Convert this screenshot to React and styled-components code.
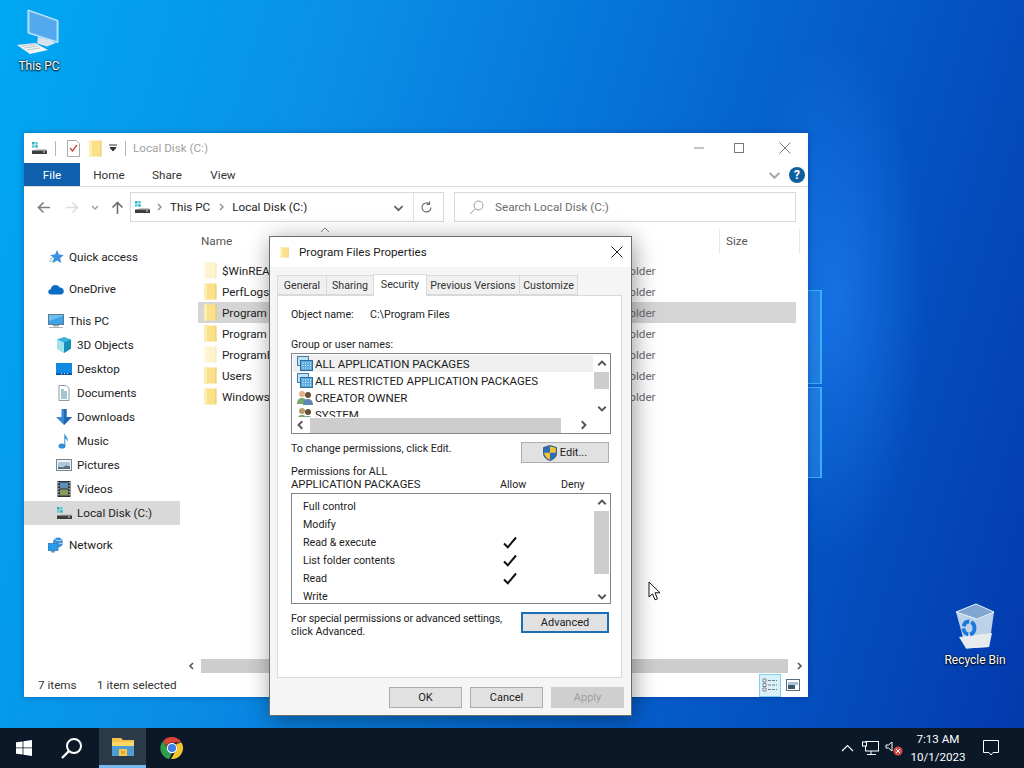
import React from 'react';
import styled, { createGlobalStyle } from 'styled-components';

const Global = createGlobalStyle`
  html, body { margin: 0; padding: 0; }
  body { font-family: Roboto, "Liberation Sans", sans-serif; font-size: 11.7px; color: #1c1c1c; }
  * { box-sizing: border-box; }
`;

const Desktop = styled.div`
  position: relative;
  width: 1024px;
  height: 768px;
  overflow: hidden;
  background:
    radial-gradient(ellipse 90px 260px at 835px 300px, rgba(40, 140, 255, .5), transparent),
    linear-gradient(106deg, #00a8f2 0%, #0a90e6 28%, #0672d8 52%, #0556c6 74%, #0339ab 100%);
`;

const LogoPane = styled.div`
  position: absolute;
  left: 800px;
  width: 22px;
  top: ${p => p.$top}px;
  height: ${p => p.$height}px;
  background: rgba(60, 165, 245, .34);
  border-right: 2px solid #38b0f4;
  border-top: 1px solid #38b0f4;
  border-bottom: 1px solid #38b0f4;
`;

const DesktopIcon = styled.div`
  position: absolute;
  left: ${p => p.$x}px;
  top: ${p => p.$y}px;
  width: 76px;
  display: flex;
  flex-direction: column;
  align-items: center;
  gap: ${p => p.$gap}px;
  color: #fff;
  font-size: 12px;
  text-shadow: 0 1px 2px #000, 0 0 2px #000;
`;

/* explorer window */
const Explorer = styled.div`
  position: absolute;
  left: 24px;
  top: 133px;
  width: 784px;
  height: 564px;
  background: #fff;
  display: flex;
  flex-direction: column;
  box-shadow: 0 0 6px rgba(0, 30, 90, .35);
`;

const TitleBar = styled.div`
  height: 30px;
  display: flex;
  align-items: center;
  padding-left: 7px;
  flex-shrink: 0;
`;

const TitleSep = styled.span`
  width: 1px;
  height: 15px;
  background: #b5b5b5;
  margin: 0 ${p => p.$right}px 0 ${p => p.$left}px;
`;

const TitleText = styled.span`
  color: #a2a2a2;
  flex: 1;
`;

const TitleGap = styled.span`
  width: ${p => p.$w}px;
`;

const WindowCtl = styled.span`
  display: flex;
  justify-content: center;
  width: ${p => p.$w}px;
`;

const RibbonTabs = styled.div`
  height: 24px;
  display: flex;
  align-items: center;
  border-bottom: 1px solid #dadada;
  flex-shrink: 0;
`;

const FileTab = styled.div`
  width: 56px;
  height: 23px;
  background: #0f5fad;
  color: #fff;
  display: flex;
  align-items: center;
  justify-content: center;
`;

const RibbonTab = styled.div`
  width: 56px;
  text-align: center;
  color: #333;
  margin-left: ${p => p.$ml || 0}px;
`;

const RibbonRight = styled.div`
  margin-left: auto;
  display: flex;
  align-items: center;
  gap: 8px;
  padding-right: 3px;
`;

const HelpBadge = styled.span`
  width: 16px;
  height: 16px;
  border-radius: 50%;
  background: #10609f;
  color: #fff;
  font-weight: 700;
  font-size: 12px;
  display: flex;
  align-items: center;
  justify-content: center;
`;

const AddressRow = styled.div`
  height: 40px;
  display: flex;
  align-items: center;
  flex-shrink: 0;
`;

const NavButtons = styled.div`
  width: 106px;
  display: flex;
  align-items: center;
  padding-left: 12px;
`;

const NavButton = styled.span`
  display: flex;
  justify-content: center;
  width: ${p => p.$w}px;
`;

const AddressBox = styled.div`
  width: 314px;
  height: 30px;
  border: 1px solid #d9d9d9;
  display: flex;
  align-items: center;
  padding-left: 3px;
  color: #222;
`;

const Crumb = styled.span`
  display: flex;
  margin-left: ${p => p.$ml}px;
`;

const AddressTools = styled.div`
  margin-left: auto;
  display: flex;
  align-items: center;
`;

const ToolSep = styled.span`
  width: 1px;
  height: 28px;
  background: #e3e3e3;
  margin: 0 6px 0 9px;
`;

const SearchBox = styled.div`
  margin-left: 10px;
  width: 342px;
  height: 30px;
  border: 1px solid #d9d9d9;
  display: flex;
  align-items: center;
  gap: 11px;
  padding-left: 14px;
  color: #6d6d6d;
`;

const Body = styled.div`
  flex: 1;
  display: flex;
  min-height: 0;
`;

const NavPane = styled.div`
  width: 162px;
  padding: 18px 6px 0 0;
  flex-shrink: 0;
`;

const NavItem = styled.div`
  height: 24px;
  display: flex;
  align-items: center;
  gap: 5px;
  padding-left: ${p => p.$child ? 32 : 24}px;
  margin-top: ${p => p.$gap ? 8 : 0}px;
  background: ${p => p.$selected ? '#d9d9d9' : 'transparent'};
  color: #222;
`;

const MainCol = styled.div`
  flex: 1;
  display: flex;
  flex-direction: column;
  min-width: 0;
`;

const ColHeader = styled.div`
  position: relative;
  height: 33px;
  margin-left: 12px;
  display: grid;
  grid-template-columns: 522px 80px;
  align-items: start;
  padding-top: 2px;
  color: #555;
`;

const ColCell = styled.div`
  height: 25px;
  line-height: 24px;
  padding-left: ${p => p.$pad}px;
  border-right: ${p => p.$line ? '1px solid #e8e8e8' : 'none'};
`;

const SortCaret = styled.svg`
  position: absolute;
  left: 122px;
  top: 0;
`;

const FileList = styled.div`
  flex: 1;
  margin-left: 12px;
  width: 598px;
`;

const FileRow = styled.div`
  height: 21px;
  display: grid;
  grid-template-columns: 406px 1fr;
  align-items: center;
  background: ${p => p.$selected ? '#d5d5d5' : 'transparent'};
`;

const FileName = styled.div`
  display: flex;
  align-items: center;
  gap: 5px;
  padding-left: 5px;
  color: #222;
  white-space: nowrap;
`;

const FileType = styled.div`
  color: #6d6d6d;
`;

const HScroll = styled.div`
  height: 15px;
  display: flex;
  align-items: center;
  padding: 0 5px 0 2px;
`;

const ScrollTrack = styled.div`
  flex: 1;
  height: 14px;
  background: #cdcdcd;
  margin: 0 7px 0 5px;
`;

const ArrowBox = styled.span`
  display: flex;
  align-items: center;
  justify-content: center;
  width: ${p => p.$w || 16}px;
  height: ${p => p.$h || 16}px;
  flex-shrink: 0;
`;

const StatusBar = styled.div`
  height: 24px;
  display: flex;
  align-items: center;
  padding-left: 14px;
  color: #333;
  flex-shrink: 0;
`;

const StatusText = styled.span`
  width: ${p => p.$w}px;
`;

const ViewButtons = styled.div`
  margin-left: auto;
  display: flex;
  align-items: center;
  gap: 4px;
  padding-right: 7px;
`;

const ViewButton = styled.span`
  width: ${p => p.$active ? 22 : 16}px;
  height: 23px;
  display: flex;
  align-items: center;
  justify-content: center;
  background: ${p => p.$active ? '#d8f0fa' : 'transparent'};
  border: ${p => p.$active ? '1px solid #7fd0ef' : 'none'};
`;

/* properties dialog */
const Dialog = styled.div`
  position: absolute;
  left: 269px;
  top: 236px;
  width: 363px;
  height: 480px;
  background: #f5f5f5;
  border: 1px solid #6c6c6c;
  display: flex;
  flex-direction: column;
  font-size: 10.7px;
  box-shadow: 2px 4px 22px rgba(0, 0, 0, .4);
`;

const DialogTitle = styled.div`
  height: 30px;
  background: #fff;
  display: flex;
  align-items: center;
  padding-left: 10px;
  gap: 10px;
  font-size: 11.6px;
  color: #1c1c1c;
  flex-shrink: 0;
`;

const DialogClose = styled.span`
  margin-left: auto;
  display: flex;
  margin-right: 8px;
`;

const TabStrip = styled.div`
  height: 28px;
  padding: 8px 0 0 7px;
  display: flex;
  align-items: flex-end;
  flex-shrink: 0;
`;

const Tab = styled.div`
  width: ${p => p.$w}px;
  height: ${p => p.$active ? 22 : 20}px;
  background: ${p => p.$active ? '#fff' : '#f0f0f0'};
  border: 1px solid #d9d9d9;
  border-bottom: ${p => p.$active ? 'none' : '1px solid #d9d9d9'};
  margin-left: ${p => p.$first ? 0 : -1}px;
  display: flex;
  align-items: center;
  justify-content: center;
  padding-bottom: ${p => p.$active ? 3 : 0}px;
  position: relative;
  z-index: ${p => p.$active ? 1 : 0};
  margin-bottom: ${p => p.$active ? -1 : 0}px;
  color: #333;
  white-space: nowrap;
`;

const Panel = styled.div`
  width: 345px;
  height: 383px;
  margin-left: 7px;
  background: #fff;
  border: 1px solid #d9d9d9;
  padding: 11px 0 0 13px;
  flex-shrink: 0;
`;

const ObjectRow = styled.div`
  display: flex;
  height: 16px;
  line-height: 16px;
`;

const ObjectLabel = styled.span`
  width: 79px;
`;

const GroupLabel = styled.div`
  margin-top: 14px;
  height: 16px;
  line-height: 16px;
`;

const ListBox = styled.div`
  width: 320px;
  height: ${p => p.$h}px;
  border: 1px solid #82878f;
  background: #fff;
  display: grid;
  grid-template-columns: 301px 1fr;
  grid-template-rows: ${p => p.$hbar ? '1fr 16px' : '1fr'};
  overflow: hidden;
`;

const ListRows = styled.div`
  padding: ${p => p.$padTop}px 0 0 1px;
  overflow: hidden;
  min-height: 0;
`;

const GroupRow = styled.div`
  height: 17px;
  display: flex;
  align-items: center;
  gap: 2px;
  padding-left: 4px;
  font-size: 11.5px;
  background: ${p => p.$selected ? '#f0f0f0' : 'transparent'};
  white-space: nowrap;
`;

const PermRow = styled.div`
  height: 18px;
  display: grid;
  grid-template-columns: 192px 30px;
  align-items: center;
  padding-left: 10px;
`;

const PermCheck = styled.span`
  display: flex;
  justify-content: center;
`;

const VBar = styled.div`
  display: flex;
  flex-direction: column;
  align-items: center;
  padding: ${p => p.$pad}px 0 0 0;
  background: #fff;
  min-height: 0;
  overflow: hidden;
`;

const VThumb = styled.div`
  width: 15px;
  height: ${p => p.$h}px;
  background: #cdcdcd;
  margin-bottom: ${p => p.$after}px;
  flex-shrink: 0;
`;

const HBar = styled.div`
  display: flex;
  align-items: center;
  grid-column: 1 / 2;
  background: #fff;
`;

const HThumb = styled.div`
  width: 251px;
  height: 15px;
  background: #cdcdcd;
  margin-right: 13px;
`;

const EditRow = styled.div`
  width: 318px;
  margin-top: 8px;
  display: flex;
  justify-content: space-between;
  align-items: flex-start;
`;

const EditText = styled.span`
  line-height: 13px;
  white-space: nowrap;
`;

const TightLine = styled.span`
  letter-spacing: -0.13px;
`;

const CapsLine = styled.span`
  font-size: 11.3px;
`;

const PushButton = styled.button`
  width: ${p => p.$w || 88}px;
  height: 21px;
  font: inherit;
  font-size: 11px;
  padding: 0;
  flex-shrink: 0;
  color: ${p => p.$disabled ? '#a0a0a0' : '#222'};
  background: ${p => p.$disabled ? '#cfcfcf' : '#e1e1e1'};
  border: ${p => p.$focused ? '2px solid #1a6fb5' : p.$disabled ? '1px solid #cfcfcf' : '1px solid #adadad'};
  display: flex;
  align-items: center;
  justify-content: center;
  gap: 3px;
`;

const PermHead = styled.div`
  width: 320px;
  margin: 2px 0;
  height: 26px;
  line-height: 13px;
  display: grid;
  grid-template-columns: 209px 61px 1fr;
  align-items: end;
`;

const Footer = styled.div`
  flex: 1;
  display: flex;
  justify-content: flex-end;
  gap: 8px;
  padding: 9px 7px 0 0;
`;

/* taskbar */
const Taskbar = styled.div`
  position: absolute;
  left: 0;
  right: 0;
  bottom: 0;
  height: 40px;
  background: #0a1828;
  display: flex;
  align-items: center;
  color: #fff;
`;

const TaskButton = styled.div`
  width: ${p => p.$w}px;
  height: 40px;
  margin-left: ${p => p.$ml || 0}px;
  display: flex;
  align-items: center;
  justify-content: center;
  background: ${p => p.$active ? '#2c3b49' : 'transparent'};
  border-bottom: ${p => p.$active ? '3px solid #76b9ed' : 'none'};
`;

const Tray = styled.div`
  margin-left: auto;
  display: flex;
  align-items: center;
  height: 40px;
  padding-right: 15px;
`;

const TrayIcon = styled.span`
  display: flex;
  justify-content: center;
  width: ${p => p.$w}px;
`;

const Clock = styled.div`
  width: 67px;
  padding-right: 3px;
  text-align: center;
  line-height: 18px;
  font-size: 11.6px;
`;

const Cursor = styled.svg`
  position: absolute;
  left: 648px;
  top: 581px;
`;

/* drawings */
const FolderIcon = ({ faded, w = 14, h = 17 }) => (
  <svg width={w} height={h} viewBox="0 0 14 17">
    <rect x="1" y="0.5" width="12" height="16" fill={faded ? '#fdf3cc' : '#fbe08a'} />
    <rect x="1" y="0.5" width="3" height="16" fill={faded ? '#fff8de' : '#fdeeb4'} />
    <path d="M13 .5v16" stroke={faded ? '#f0e3b0' : '#e8c560'} />
  </svg>
);

const DiskIcon = () => (
  <svg width="16" height="14" viewBox="0 0 16 14">
    <rect x="1" y="1" width="2.5" height="2.5" fill="#27b0c0" />
    <rect x="4.2" y="1" width="2.5" height="2.5" fill="#5cc8d4" />
    <rect x="1" y="4.2" width="2.5" height="2.5" fill="#5cc8d4" />
    <rect x="4.2" y="4.2" width="2.5" height="2.5" fill="#27b0c0" />
    <path d="M7 8l8 0 1 1.5H1z" fill="#c4c4c4" />
    <rect x="1" y="9.5" width="15" height="3.5" fill="#3d3d3d" />
    <rect x="12" y="10.5" width="2" height="1" fill="#dcdcdc" />
  </svg>
);

const Chevron = ({ dir = 'right', size = 8, color = '#8a8a8a', width = 1.3 }) => {
  const d = {
    right: 'M3 1l3 3-3 3',
    left: 'M5 1L2 4l3 3',
    up: 'M1 5l3-3 3 3',
    down: 'M1 3l3 3 3-3',
  }[dir];
  return (
    <svg width={size} height={size} viewBox="0 0 8 8">
      <path d={d} fill="none" stroke={color} strokeWidth={width} />
    </svg>
  );
};

const Arrow = ({ dir, color }) => {
  const r = { left: 0, right: 180, up: 90 }[dir];
  return (
    <svg width="13" height="13" viewBox="0 0 13 13" style={{ transform: `rotate(${r}deg)` }}>
      <path d="M13 6.500H1.500M6.500 1.500l-5 5 5 5" fill="none" stroke={color} strokeWidth="1.600" />
    </svg>
  );
};

const StarIcon = () => (
  <svg width="16" height="16" viewBox="0 0 16 16">
    <path d="M9 1l2 4.600 4.800.4-3.600 3.200 1.100 4.800L9 11.500 4.700 14l1.100-4.800L2.200 6 7 5.600z" fill="#3c92dc" />
    <path d="M1 12h4M2 9.500h2" stroke="#8ab6d8" />
  </svg>
);

const CloudIcon = () => (
  <svg width="16" height="14" viewBox="0 0 16 14">
    <path d="M3.500 12.500C1.500 12.500.2 11.300.2 9.800c0-1.500 1.100-2.500 2.500-2.600C3.100 4.500 5.200 3 7.500 3c2 0 3.500 1 4.200 2.600 2.300 0 4.100 1.700 4.100 3.700 0 1.800-1.300 3.200-3.200 3.200z" fill="#0c6cc4" />
  </svg>
);

const MonitorIcon = () => (
  <svg width="16" height="16" viewBox="0 0 16 16">
    <rect x="0.500" y="1.500" width="15" height="10" fill="#6cc0f0" stroke="#5c7a96" />
    <path d="M1 8l14-5v8H1z" fill="#3ea2e6" />
    <rect x="5" y="12" width="6" height="1.500" fill="#9aa8b4" />
    <rect x="1" y="14" width="14" height="1" fill="#aab4bc" />
  </svg>
);

const CubeIcon = () => (
  <svg width="16" height="16" viewBox="0 0 16 16">
    <path d="M8 0l7 2.500v9L8 16 1 11.500v-9z" fill="#38b4d8" />
    <path d="M1 2.500L8 5.500V16L1 11.500z" fill="#9fe4ee" />
    <path d="M8 5.500l7-3v9L8 16z" fill="#178fb8" />
  </svg>
);

const DesktopIconSvg = () => (
  <svg width="16" height="14" viewBox="0 0 16 14">
    <rect x="0" y="1" width="16" height="12" fill="#0f8ae2" />
    <rect x="0" y="11" width="16" height="2" fill="#0a5ba4" />
    <path d="M5 11.500h1M8 11.500h1M11 11.500h1" stroke="#bfe0f5" />
  </svg>
);

const DocIcon = () => (
  <svg width="16" height="16" viewBox="0 0 16 16">
    <path d="M3 .5h7l3 3v12H3z" fill="#fff" stroke="#8f9aa6" />
    <path d="M5 5h3M5 7h6M5 9h6M5 11h6M5 13h6" stroke="#3c8f9e" />
  </svg>
);

const DownloadIcon = () => (
  <svg width="16" height="16" viewBox="0 0 16 16">
    <path d="M5.500 0h5v8H16l-8 8-8-8h5.500z" fill="#3a86d6" />
    <path d="M8 0h2.500v8H16l-8 8z" fill="#1f68b8" />
  </svg>
);

const MusicIcon = () => (
  <svg width="16" height="16" viewBox="0 0 16 16">
    <ellipse cx="6" cy="13" rx="3.500" ry="2.600" fill="#2e8ed8" />
    <path d="M8.300 13V0c.6 3 4.600 4.400 3.400 9-.3-2-1.800-3.200-2.400-3.400V13z" fill="#2e8ed8" />
  </svg>
);

const PicturesIcon = () => (
  <svg width="16" height="14" viewBox="0 0 16 14">
    <rect x="0.500" y="1.500" width="15" height="11" fill="#eef2f4" stroke="#7b8794" />
    <path d="M2 4h12v4l-4-1-3 2-5-1z" fill="#a6c9dc" />
    <path d="M2 8.500l5 .8 3-2 4 1V11H2z" fill="#53707c" />
  </svg>
);

const VideosIcon = () => (
  <svg width="16" height="16" viewBox="0 0 16 16">
    <rect x="1.500" y="0" width="13" height="16" fill="#2b3138" />
    <rect x="4" y="1.500" width="8" height="6" fill="#5f8fb8" />
    <rect x="4" y="8.500" width="8" height="6" fill="#8a9a5a" />
    <path d="M2.800 1v14M13.200 1v14" stroke="#cfd5da" strokeDasharray="1.500 1.500" />
  </svg>
);

const NetworkIcon = () => (
  <svg width="16" height="16" viewBox="0 0 16 16">
    <circle cx="10" cy="5.500" r="5" fill="#3a8fd6" />
    <path d="M7 2c2 2 4 2 7 1M6 6c3 1 5 1 9 0" stroke="#b7dcf2" fill="none" />
    <rect x="0" y="6.500" width="10" height="7" fill="#2b9be8" stroke="#1c70b4" strokeWidth=".7" />
    <rect x="3" y="14" width="4" height="1.500" fill="#7d98ac" />
  </svg>
);

const PackageIcon = () => (
  <svg width="16" height="15" viewBox="0 0 16 15">
    <rect x="0.500" y="0.500" width="11" height="9" fill="#bfe0f5" stroke="#3f7fb0" />
    <rect x="3.500" y="4.500" width="12" height="10" fill="#5aa8dc" stroke="#2f6f9f" />
    <path d="M5.500 7h1M8 7h1M10.500 7h1M13 7h1M5.500 9.500h1M8 9.500h1M10.500 9.500h1M13 9.500h1M5.500 12h1M8 12h1M10.500 12h1M13 12h1" stroke="#fff" strokeWidth="1.200" />
  </svg>
);

const UsersIcon = ({ tone }) => (
  <svg width="16" height="15" viewBox="0 0 16 15">
    <circle cx="5" cy="4" r="3" fill={tone} />
    <path d="M0 14c0-4 2-6 5-6s5 2 5 6z" fill="#7aa86c" />
    <circle cx="11" cy="5" r="3" fill="#6a4f3a" />
    <path d="M6 15c0-4 2-6 5-6s5 2 5 6z" fill="#5e88b4" />
  </svg>
);

const CheckMark = () => (
  <svg width="14" height="13" viewBox="0 0 14 13">
    <path d="M1 7.500l3.800 3.800L13 1.500" fill="none" stroke="#111" strokeWidth="2" />
  </svg>
);

const ShieldIcon = () => (
  <svg width="14" height="16" viewBox="0 0 14 16">
    <path d="M7 .5l6.500 2v6c0 3.500-3 6-6.500 7-3.500-1-6.500-3.500-6.500-7v-6z" fill="#2c6fb8" stroke="#1d3f68" strokeWidth=".7" />
    <path d="M7 1.200v6.600h5.800V3zM7 7.800H1.200C1.500 11 4 13.800 7 14.800z" fill="#f2c230" />
  </svg>
);

const PcDrawing = () => (
  <svg width="50" height="46" viewBox="0 0 50 46">
    <path d="M14 1l30 10.500v22L14 24z" fill="#7ec4f4" stroke="#d8eefc" strokeWidth="1" />
    <path d="M16 3l26 9.200v19.300L16 23z" fill="#53a8ee" />
    <path d="M24 28l12 3 6 3-9 3.500-10-3z" fill="#d6e4ee" />
    <path d="M3 36l18-2 13 7-18 4z" fill="#f2f5f7" />
    <path d="M7 37l14-1.500M10 39l14-2M13 41l13-2" stroke="#b8c4cc" />
  </svg>
);

const BinDrawing = () => (
  <svg width="40" height="46" viewBox="0 0 40 46">
    <path d="M1 9L21 1l18 8-5 35-23 1.500z" fill="#bcd2e8" />
    <path d="M1 9L21 1l18 8-17 7z" fill="#7ea6d0" stroke="#e3eef8" />
    <path d="M4 34l33-4-3 14-23 1.500z" fill="#e6ebee" />
    <ellipse cx="14" cy="25" rx="5.500" ry="6.500" fill="none" stroke="#1878dc" strokeWidth="3.800" strokeDasharray="8 2" />
  </svg>
);

const ExplorerBadge = () => (
  <svg width="22" height="19" viewBox="0 0 22 19">
    <path d="M0 1h9l2 2h11v6H0z" fill="#f5c24a" />
    <rect x="0" y="5" width="22" height="14" fill="#fbd768" />
    <rect x="0" y="9" width="22" height="10" fill="#4f9bd4" />
    <rect x="7" y="12" width="8" height="7" fill="#f6c94f" />
    <rect x="9" y="14" width="4" height="3" fill="#e4a72e" />
  </svg>
);

const ChromeLogo = () => (
  <svg width="24" height="24" viewBox="0 0 48 48">
    <path d="M24 2a22 22 0 0 1 19 11H24a11 11 0 0 0-10.400 7.500L6.300 10A22 22 0 0 1 24 2z" fill="#db4437" />
    <path d="M6.300 10l9.500 16.500A11 11 0 0 0 24 35l-6 11.100A22 22 0 0 1 6.300 10z" fill="#2f9e4a" />
    <path d="M43 13a22 22 0 0 1-21 33l9.600-16.600A11 11 0 0 0 32 16z" fill="#f7c52c" />
    <circle cx="24" cy="24" r="10.500" fill="#fff" />
    <circle cx="24" cy="24" r="8.200" fill="#3d7fe6" />
  </svg>
);

const groups = [
  { name: 'ALL APPLICATION PACKAGES', icon: <PackageIcon />, selected: true },
  { name: 'ALL RESTRICTED APPLICATION PACKAGES', icon: <PackageIcon /> },
  { name: 'CREATOR OWNER', icon: <UsersIcon tone="#e2b48c" /> },
  { name: 'SYSTEM', icon: <UsersIcon tone="#b8a070" /> },
];

const perms = [
  ['Full control', false],
  ['Modify', false],
  ['Read & execute', true],
  ['List folder contents', true],
  ['Read', true],
  ['Write', false],
];

const files = [
  ['$WinREAgent', true],
  ['PerfLogs', false],
  ['Program Files', false, true],
  ['Program Files (x86)', false],
  ['ProgramData', true],
  ['Users', false],
  ['Windows', false],
];

const navItems = [
  { label: 'Quick access', icon: <StarIcon /> },
  { label: 'OneDrive', icon: <CloudIcon />, gap: true },
  { label: 'This PC', icon: <MonitorIcon />, gap: true },
  { label: '3D Objects', icon: <CubeIcon />, child: true },
  { label: 'Desktop', icon: <DesktopIconSvg />, child: true },
  { label: 'Documents', icon: <DocIcon />, child: true },
  { label: 'Downloads', icon: <DownloadIcon />, child: true },
  { label: 'Music', icon: <MusicIcon />, child: true },
  { label: 'Pictures', icon: <PicturesIcon />, child: true },
  { label: 'Videos', icon: <VideosIcon />, child: true },
  { label: 'Local Disk (C:)', icon: <DiskIcon />, child: true, selected: true },
  { label: 'Network', icon: <NetworkIcon />, gap: true },
];

export default function App() {
  return (
    <Desktop>
      <Global />
      <LogoPane $top={290} $height={94} />
      <LogoPane $top={387} $height={91} />

      <DesktopIcon $x={1} $y={9} $gap={4}>
        <PcDrawing />
        <span>This PC</span>
      </DesktopIcon>
      <DesktopIcon $x={937} $y={603} $gap={4}>
        <BinDrawing />
        <span>Recycle Bin</span>
      </DesktopIcon>

      <Explorer>
        <TitleBar>
          <DiskIcon />
          <TitleSep $left={8} $right={11} />
          <svg width="13" height="17" viewBox="0 0 13 17">
            <path d="M.5.500h9l3 3v13H.500z" fill="#fff" stroke="#a9a9a9" />
            <path d="M3 8l2.500 3L10 5" fill="none" stroke="#c8413b" strokeWidth="1.300" />
          </svg>
          <TitleGap $w={8} />
          <FolderIcon />
          <TitleGap $w={7} />
          <svg width="8" height="8" viewBox="0 0 8 8">
            <path d="M0 1h8M1 3.500h6L4 7z" stroke="#333" fill="#333" />
          </svg>
          <TitleSep $left={8} $right={7} />
          <TitleText>Local Disk (C:)</TitleText>
          <WindowCtl $w={34}>
            <svg width="10" height="10" viewBox="0 0 10 10"><path d="M0 5h10" stroke="#888" /></svg>
          </WindowCtl>
          <WindowCtl $w={46}>
            <svg width="10" height="10" viewBox="0 0 10 10"><rect x=".5" y=".5" width="9" height="9" fill="none" stroke="#777" /></svg>
          </WindowCtl>
          <WindowCtl $w={46}>
            <svg width="12" height="12" viewBox="0 0 12 12"><path d="M.5.500l11 11M11.500.500l-11 11" stroke="#777" /></svg>
          </WindowCtl>
        </TitleBar>

        <RibbonTabs>
          <FileTab>File</FileTab>
          <RibbonTab $ml={1}>Home</RibbonTab>
          <RibbonTab $ml={2}>Share</RibbonTab>
          <RibbonTab>View</RibbonTab>
          <RibbonRight>
            <Chevron dir="down" size={13} color="#a8a8a8" />
            <HelpBadge>?</HelpBadge>
          </RibbonRight>
        </RibbonTabs>

        <AddressRow>
          <NavButtons>
            <NavButton $w={15}><Arrow dir="left" color="#7d7d7d" /></NavButton>
            <NavButton $w={14} />
            <NavButton $w={15}><Arrow dir="right" color="#dddddd" /></NavButton>
            <NavButton $w={30}><Chevron dir="down" color="#9a9a9a" /></NavButton>
            <NavButton $w={14}><Arrow dir="up" color="#6f6f6f" /></NavButton>
          </NavButtons>
          <AddressBox>
            <DiskIcon />
            <Crumb $ml={5}><Chevron /></Crumb>
            <Crumb $ml={7}>This PC</Crumb>
            <Crumb $ml={7}><Chevron /></Crumb>
            <Crumb $ml={7}>Local Disk (C:)</Crumb>
            <AddressTools>
              <Chevron dir="down" size={11} color="#666" />
              <ToolSep />
              <svg width="13" height="13" viewBox="0 0 13 13" style={{ marginRight: 10 }}>
                <path d="M11 6.500a4.500 4.500 0 1 1-1.500-3.400M9.500.500v3h-3" fill="none" stroke="#6f6f6f" strokeWidth="1.200" />
              </svg>
            </AddressTools>
          </AddressBox>
          <SearchBox>
            <svg width="15" height="15" viewBox="0 0 15 15">
              <circle cx="9.500" cy="5.500" r="4.500" fill="none" stroke="#9a9a9a" />
              <path d="M6 9l-5 5" stroke="#9a9a9a" />
            </svg>
            <span>Search Local Disk (C:)</span>
          </SearchBox>
        </AddressRow>

        <Body>
          <NavPane>
            {navItems.map(item => (
              <NavItem key={item.label} $child={item.child} $gap={item.gap} $selected={item.selected}>
                {item.icon}
                <span>{item.label}</span>
              </NavItem>
            ))}
          </NavPane>
          <MainCol>
            <ColHeader>
              <SortCaret width="10" height="6" viewBox="0 0 10 6">
                <path d="M1 5l4-4 4 4" fill="none" stroke="#8a8a8a" />
              </SortCaret>
              <ColCell $pad={3} $line>Name</ColCell>
              <ColCell $pad={6} $line>Size</ColCell>
            </ColHeader>
            <FileList>
              {files.map(([name, faded, selected]) => (
                <FileRow key={name} $selected={selected}>
                  <FileName>
                    <FolderIcon faded={faded} />
                    {name}
                  </FileName>
                  <FileType>File folder</FileType>
                </FileRow>
              ))}
            </FileList>
            <HScroll>
              <Chevron dir="left" color="#555" width={1.6} />
              <ScrollTrack />
              <Chevron dir="right" color="#555" width={1.6} />
            </HScroll>
          </MainCol>
        </Body>

        <StatusBar>
          <StatusText $w={59}>7 items</StatusText>
          <StatusText $w={100}>1 item selected</StatusText>
          <ViewButtons>
            <ViewButton $active>
              <svg width="16" height="14" viewBox="0 0 16 14">
                <path d="M1 1h3v3H1zM1 5.500h3v3H1zM1 10h3v3H1z" fill="#fff" stroke="#666" strokeWidth=".8" />
                <path d="M6 2.500h9M6 7h9M6 11.500h9" stroke="#7a7a7a" strokeDasharray="3 1" />
              </svg>
            </ViewButton>
            <ViewButton>
              <svg width="14" height="12" viewBox="0 0 14 12">
                <rect x=".5" y=".5" width="13" height="11" fill="#fff" stroke="#5a6b7a" />
                <rect x="2" y="3" width="10" height="3" fill="#a4c4da" />
                <rect x="2" y="6" width="7" height="4" fill="#3e5664" />
              </svg>
            </ViewButton>
          </ViewButtons>
        </StatusBar>
      </Explorer>

      <Dialog>
        <DialogTitle>
          <FolderIcon w={9} h={13} />
          <span>Program Files Properties</span>
          <DialogClose>
            <svg width="12" height="12" viewBox="0 0 12 12"><path d="M.5.500l11 11M11.500.500l-11 11" stroke="#222" /></svg>
          </DialogClose>
        </DialogTitle>
        <TabStrip>
          <Tab $w={50} $first>General</Tab>
          <Tab $w={48}>Sharing</Tab>
          <Tab $w={54} $active>Security</Tab>
          <Tab $w={94}>Previous Versions</Tab>
          <Tab $w={59}>Customize</Tab>
        </TabStrip>
        <Panel>
          <ObjectRow>
            <ObjectLabel>Object name:</ObjectLabel>
            <span>C:\Program Files</span>
          </ObjectRow>
          <GroupLabel>Group or user names:</GroupLabel>
          <ListBox $h={81} $hbar>
            <ListRows $padTop={1}>
              {groups.map(g => (
                <GroupRow key={g.name} $selected={g.selected}>
                  {g.icon}
                  <span>{g.name}</span>
                </GroupRow>
              ))}
            </ListRows>
            <VBar $pad={2}>
              <ArrowBox><Chevron dir="up" size={10} color="#555" width={1.5} /></ArrowBox>
              <VThumb $h={17} $after={11} />
              <ArrowBox><Chevron dir="down" size={10} color="#555" width={1.5} /></ArrowBox>
            </VBar>
            <HBar>
              <ArrowBox $w={18} $h={15}><Chevron dir="left" size={10} color="#555" width={1.5} /></ArrowBox>
              <HThumb />
              <ArrowBox $w={18} $h={15}><Chevron dir="right" size={10} color="#555" width={1.5} /></ArrowBox>
            </HBar>
          </ListBox>
          <EditRow>
            <EditText>To change permissions, click Edit.</EditText>
            <PushButton>
              <ShieldIcon />
              Edit...
            </PushButton>
          </EditRow>
          <PermHead>
            <span>Permissions for ALL<br /><CapsLine>APPLICATION PACKAGES</CapsLine></span>
            <span>Allow</span>
            <span>Deny</span>
          </PermHead>
          <ListBox $h={111}>
            <ListRows $padTop={3}>
              {perms.map(([label, allowed]) => (
                <PermRow key={label}>
                  <span>{label}</span>
                  <PermCheck>{allowed && <CheckMark />}</PermCheck>
                </PermRow>
              ))}
            </ListRows>
            <VBar $pad={1}>
              <ArrowBox><Chevron dir="up" size={10} color="#555" width={1.5} /></ArrowBox>
              <VThumb $h={63} $after={14} />
              <ArrowBox><Chevron dir="down" size={10} color="#555" width={1.5} /></ArrowBox>
            </VBar>
          </ListBox>
          <EditRow>
            <EditText><TightLine>For special permissions or advanced settings,</TightLine><br />click Advanced.</EditText>
            <PushButton $focused>Advanced</PushButton>
          </EditRow>
        </Panel>
        <Footer>
          <PushButton $w={73}>OK</PushButton>
          <PushButton $w={73}>Cancel</PushButton>
          <PushButton $w={73} $disabled>Apply</PushButton>
        </Footer>
      </Dialog>

      <Cursor width="14" height="20" viewBox="0 0 14 20">
        <path d="M1 1v15l3.500-3.200 2.500 6 2.500-1-2.500-6h5z" fill="#fff" stroke="#111" strokeWidth="1" />
      </Cursor>

      <Taskbar>
        <TaskButton $w={48}>
          <svg width="16" height="16" viewBox="0 0 16 16">
            <path d="M0 2.300L6.600 1.400V7.500H0zM7.400 1.300L16 0v7.500H7.400zM0 8.300h6.600v6.300L0 13.700zM7.400 8.300H16V16l-8.600-1.300z" fill="#fff" />
          </svg>
        </TaskButton>
        <TaskButton $w={48}>
          <svg width="22" height="22" viewBox="0 0 22 22">
            <circle cx="13" cy="9" r="7" fill="none" stroke="#fff" strokeWidth="2" />
            <path d="M8 14l-7 7" stroke="#fff" strokeWidth="2.400" />
          </svg>
        </TaskButton>
        <TaskButton $w={47} $ml={3} $active><ExplorerBadge /></TaskButton>
        <TaskButton $w={52}><ChromeLogo /></TaskButton>
        <Tray>
          <TrayIcon $w={22}>
            <svg width="13" height="8" viewBox="0 0 13 8"><path d="M1 7l5.500-5.500L12 7" fill="none" stroke="#fff" strokeWidth="1.200" /></svg>
          </TrayIcon>
          <TrayIcon $w={24}>
            <svg width="17" height="15" viewBox="0 0 17 15">
              <rect x="3.500" y=".5" width="13" height="9.500" fill="none" stroke="#fff" />
              <rect x=".5" y="1" width="4" height="4" fill="#0a1828" stroke="#fff" />
              <path d="M9 10v3M5 13.500h9" stroke="#fff" />
            </svg>
          </TrayIcon>
          <TrayIcon $w={24}>
            <svg width="18" height="16" viewBox="0 0 18 16">
              <path d="M1 5h2.500L7 2v9L3.500 8H1z" fill="none" stroke="#fff" />
              <circle cx="13" cy="11" r="4.500" fill="#d84b4b" />
              <path d="M11 9l4 4M15 9l-4 4" stroke="#fff" />
            </svg>
          </TrayIcon>
          <Clock>
            <div>7:13 AM</div>
            <div>10/1/2023</div>
          </Clock>
          <TrayIcon $w={36}>
            <svg width="16" height="16" viewBox="0 0 16 16">
              <path d="M.5.500h15v12H10l-2 2.500-2-2.500H.5z" fill="none" stroke="#fff" />
            </svg>
          </TrayIcon>
        </Tray>
      </Taskbar>
    </Desktop>
  );
}
